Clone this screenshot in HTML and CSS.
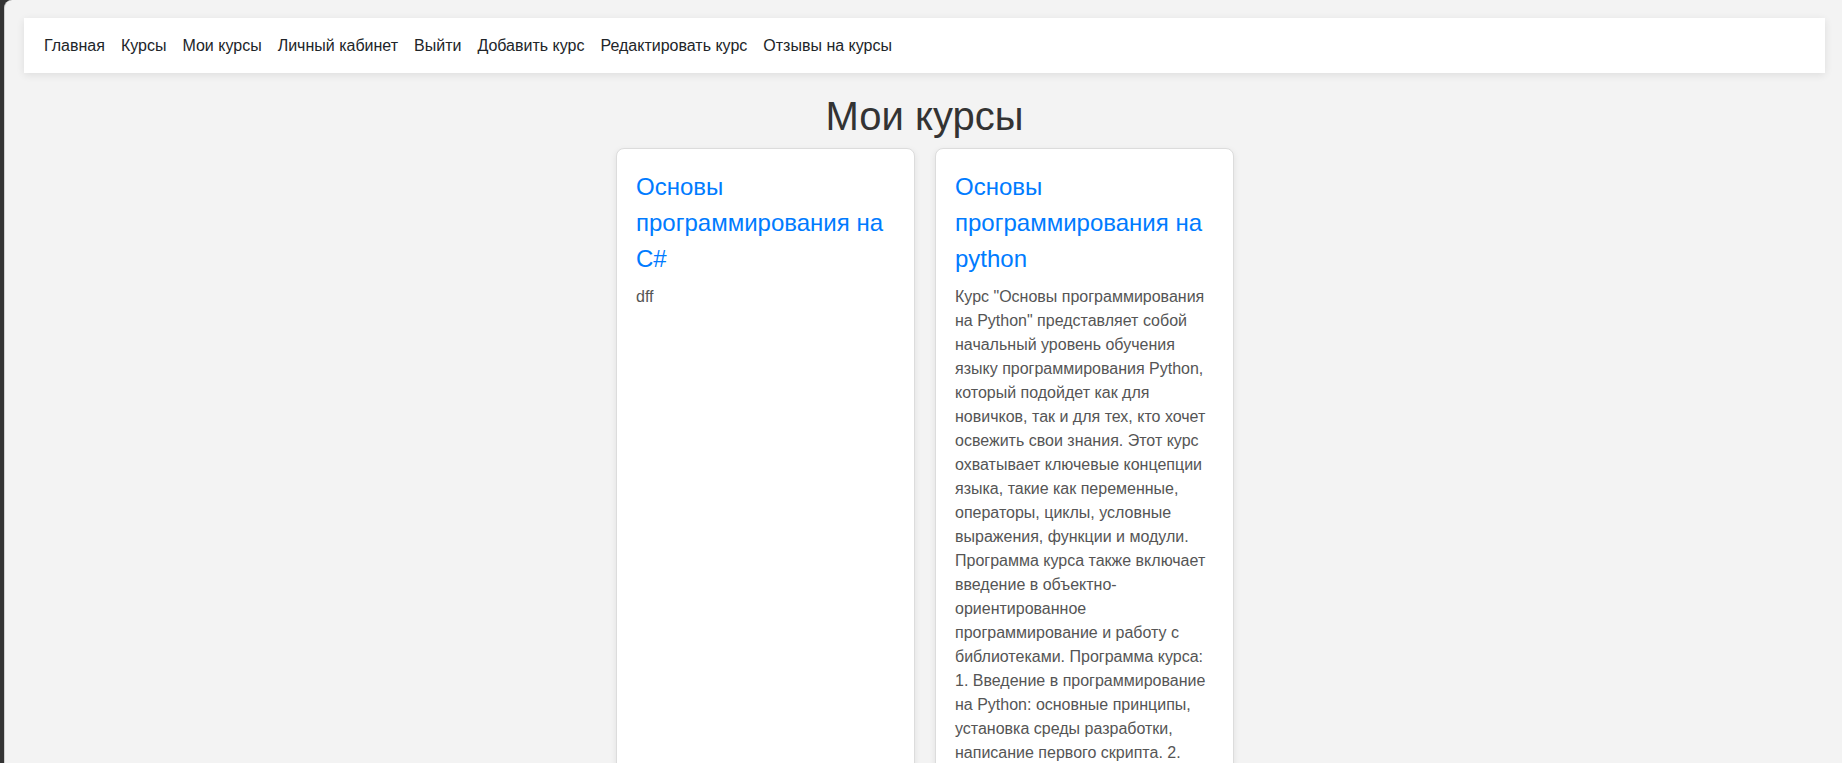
FILE: index.html
```html
<!DOCTYPE html>
<html lang="ru">
<head>
<meta charset="utf-8">
<title>Мои курсы</title>
<link rel="stylesheet" href="styles.css">
</head>
<body>
<div class="page">
  <nav class="navbar">
    <a class="nav-link" href="#">Главная</a>
    <a class="nav-link" href="#">Курсы</a>
    <a class="nav-link" href="#">Мои курсы</a>
    <a class="nav-link" href="#">Личный кабинет</a>
    <a class="nav-link" href="#">Выйти</a>
    <a class="nav-link" href="#">Добавить курс</a>
    <a class="nav-link" href="#">Редактировать курс</a>
    <a class="nav-link" href="#">Отзывы на курсы</a>
  </nav>
  <main class="content">
    <h1 class="page-title">Мои курсы</h1>
    <div class="cards">
      <div class="card">
        <h5 class="card-title">Основы программирования на C#</h5>
        <p class="card-text">dff</p>
      </div>
      <div class="card">
        <h5 class="card-title">Основы программирования на python</h5>
        <p class="card-text">Курс "Основы программирования на Python" представляет собой начальный уровень обучения языку программирования Python, который подойдет как для новичков, так и для тех, кто хочет освежить свои знания. Этот курс охватывает ключевые концепции языка, такие как переменные, операторы, циклы, условные выражения, функции и модули. Программа курса также включает введение в объектно-ориентированное программирование и работу с библиотеками. Программа курса: 1. Введение в программирование на Python: основные принципы, установка среды разработки, написание первого скрипта. 2. Основы синтаксиса: переменные, типы данных, операторы. 3. Управляющие конструкции: условия и циклы.</p>
      </div>
    </div>
  </main>
</div>
</body>
</html>
```

FILE: styles.css
```css
html, body {
  margin: 0;
  padding: 0;
  height: 100%;
  overflow: hidden;
}

html {
  background: #343434;
}

body {
  font-family: "Liberation Sans", Arial, sans-serif;
  font-size: 16px;
  line-height: 1.5;
  color: #333;
}

.page {
  margin-left: 4px;
  min-height: 100%;
  background: #f3f3f3;
  border-top-left-radius: 8px;
  border-left: 1px solid #cfcfcf;
  padding-top: 18px;
  box-sizing: border-box;
}

.navbar {
  display: flex;
  align-items: center;
  gap: 16px;
  height: 55px;
  box-sizing: border-box;
  margin: 0 17px 0 19px;
  padding: 0 20px;
  background: #fff;
  box-shadow: 0 2px 8px rgba(0, 0, 0, 0.09);
}

.nav-link {
  color: #212529;
  text-decoration: none;
  font-size: 16px;
}

.content {
  margin: 0 17px 0 19px;
}

.page-title {
  margin: 19px 0 8px;
  font-size: 40px;
  font-weight: 400;
  line-height: 1.2;
  text-align: center;
  color: #333;
}

.cards {
  display: flex;
  justify-content: center;
  gap: 20px;
}

.card {
  width: 299px;
  box-sizing: border-box;
  min-height: 700px;
  padding: 20px 20px 20px 19.5px;
  background: #fff;
  border: 1px solid #dcdcdc;
  border-radius: 8px;
  box-shadow: 0 2px 6px rgba(0, 0, 0, 0.08);
}

.card-title {
  margin: 0 0 8px;
  font-size: 24px;
  font-weight: 400;
  line-height: 1.5;
  color: #007bff;
}

.card-text {
  margin: 0;
  font-size: 16px;
  line-height: 24px;
  color: #555;
}
```
